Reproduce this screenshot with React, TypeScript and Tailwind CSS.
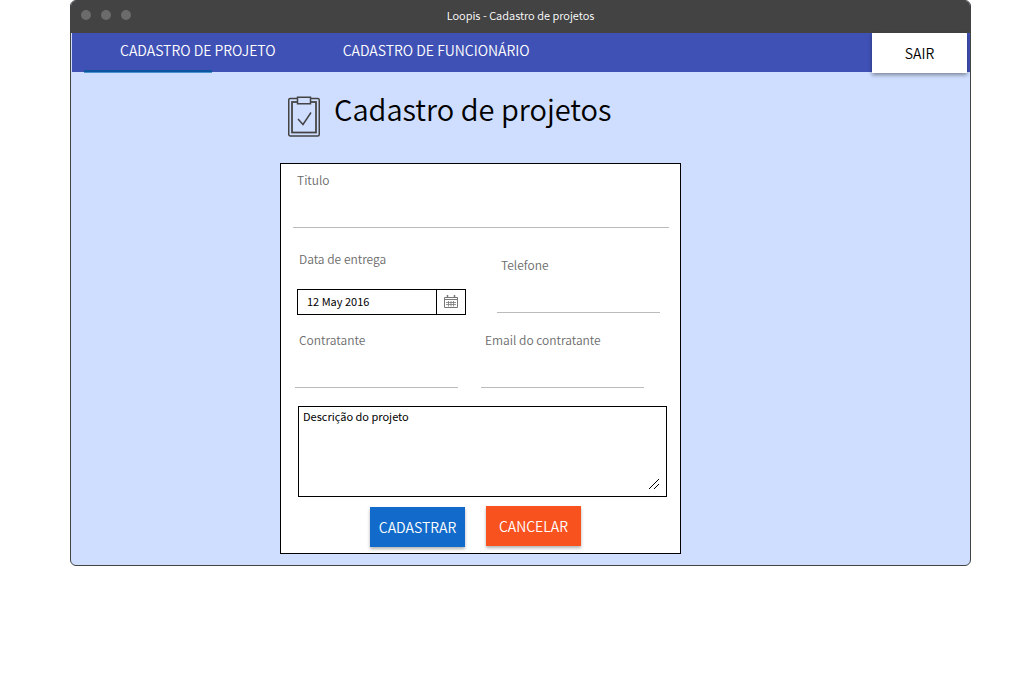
import type { InputHTMLAttributes } from 'react';

function ClipboardIcon() {
  return (
    <svg width="34" height="42" viewBox="0 0 34 42" fill="none" stroke="#434343" strokeWidth="1.5" aria-hidden="true">
      <rect x="1.75" y="2.500" width="30.5" height="37.5" rx="1.5" />
      <rect x="5" y="6" width="24" height="30.5" strokeWidth="1.75" />
      <rect x="10.5" y="1.25" width="13" height="6.5" fill="#cfdeff" />
      <path d="M11 23l5 5.500L24 16.500" />
    </svg>
  );
}

function CalendarIcon() {
  return (
    <svg width="14" height="14" viewBox="0 0 14 14" fill="none" stroke="#777777" aria-hidden="true">
      <path d="M.5 2.500h13v10H.5z" />
      <path d="M0 4.500h14" />
      <path d="M3.500 0v3M10.500 0v3" strokeWidth="1.5" />
      <path d="M2 7.500h10M2 9.500h10M4.500 6v5.500M7 6v5.500M9.500 6v5.500" strokeWidth=".8" />
    </svg>
  );
}

type FieldProps = InputHTMLAttributes<HTMLInputElement> & { id: string; label: string };

function Field({ id, label, ...rest }: FieldProps) {
  return (
    <div className="flex flex-col">
      <label htmlFor={id} className="pl-1 text-xs leading-5 text-[#6b6b6b]">
        {label}
      </label>
      <input id={id} className="h-[38px] w-full border-b border-[#bbbbbb] bg-transparent px-1 text-xs outline-none" {...rest} />
    </div>
  );
}

export default function App() {
  return (
    <div className="bg-white pr-[50px] pl-[70px] font-['Noto_Sans_CJK_SC','Noto_Sans',sans-serif] font-[350] text-black">
      <div className="overflow-hidden rounded-md border border-[#434343] bg-[#cfdeff]">
        <header className="flex h-8 items-center bg-[#434343] pb-1">
          <div className="flex-1">
            <div className="flex gap-[10px] pl-[10px]">
              <span className="size-[10px] rounded-full bg-[#6b6b6b]" />
              <span className="size-[10px] rounded-full bg-[#6b6b6b]" />
              <span className="size-[10px] rounded-full bg-[#6b6b6b]" />
            </div>
          </div>
          <span className="text-[11px] leading-4 text-white">Loopis - Cadastro de projetos</span>
          <div className="flex-1" />
        </header>

        <nav className="ml-px flex h-[39px] items-start bg-[#3f51b5] text-sm text-white">
          <a href="#projeto" className="relative flex h-[34px] items-center pl-12">
            CADASTRO DE PROJETO
            <span className="absolute top-[37px] left-3 h-[3px] w-32 border-b border-[#4a90cf] bg-[#0b569f]" />
          </a>
          <a href="#funcionario" className="ml-[67px] flex h-[34px] items-center">
            CADASTRO DE FUNCIONÁRIO
          </a>
          <button type="button" className="relative mr-[3px] ml-auto h-10 w-[95px] bg-white text-black shadow-[0_2px_4px_rgba(0,0,0,0.4)]">
            SAIR
          </button>
        </nav>

        <main className="pb-[11px] pl-[209px]">
          <div className="flex items-start gap-[13px] pt-6 pl-[7px]">
            <ClipboardIcon />
            <h1 className="text-[29px] leading-6 font-[350]">Cadastro de projetos</h1>
          </div>

          <form className="mt-[25px] w-[401px] border border-black bg-white pt-[6px] pr-[11px] pb-[6px] pl-3" onSubmit={(e) => e.preventDefault()}>
            <Field id="titulo" label="Titulo" />

            <div className="mt-[21px] flex justify-between pr-[9px] pl-1">
              <div className="flex w-[169px] flex-col">
                <label htmlFor="entrega" className="pl-[2px] text-xs leading-5 text-[#6b6b6b]">
                  Data de entrega
                </label>
                <div className="mt-5 flex h-[26px] border border-black">
                  <input id="entrega" defaultValue="12 May 2016" className="min-w-0 flex-1 px-[9px] pb-[2px] text-[11px] font-normal outline-none" />
                  <button type="button" aria-label="Abrir calendário" className="flex w-[29px] items-center justify-center border-l border-black">
                    <CalendarIcon />
                  </button>
                </div>
              </div>
              <div className="w-[163px] pt-[6px]">
                <Field id="telefone" label="Telefone" type="tel" />
              </div>
            </div>

            <div className="mt-[15px] flex gap-[23px] pl-[2px]">
              <div className="w-[163px]">
                <Field id="contratante" label="Contratante" />
              </div>
              <div className="w-[163px]">
                <Field id="email" label="Email do contratante" type="email" />
              </div>
            </div>

            <div className="relative mt-[18px] mr-[2px] ml-[5px]">
              <textarea
                aria-label="Descrição do projeto"
                placeholder="Descrição do projeto"
                className="block h-[91px] w-full resize-none border border-black px-1 py-px text-[11px] leading-4 font-normal outline-none placeholder:text-black"
              />
              <svg className="absolute right-2 bottom-2" width="10" height="10" viewBox="0 0 10 10" stroke="#000" shapeRendering="crispEdges" aria-hidden="true">
                <path d="M0 10L10 0M5 10l5-5" />
              </svg>
            </div>

            <div className="mt-[9px] flex gap-[21px] pl-[77px]">
              <button type="submit" className="mt-px h-10 w-[95px] bg-[#126bca] text-sm text-white shadow-[0_2px_3px_rgba(0,0,0,0.3)]">
                CADASTRAR
              </button>
              <button type="button" className="h-10 w-[95px] bg-[#f8521f] text-sm text-white shadow-[0_2px_3px_rgba(0,0,0,0.3)]">
                CANCELAR
              </button>
            </div>
          </form>
        </main>
      </div>
    </div>
  );
}
